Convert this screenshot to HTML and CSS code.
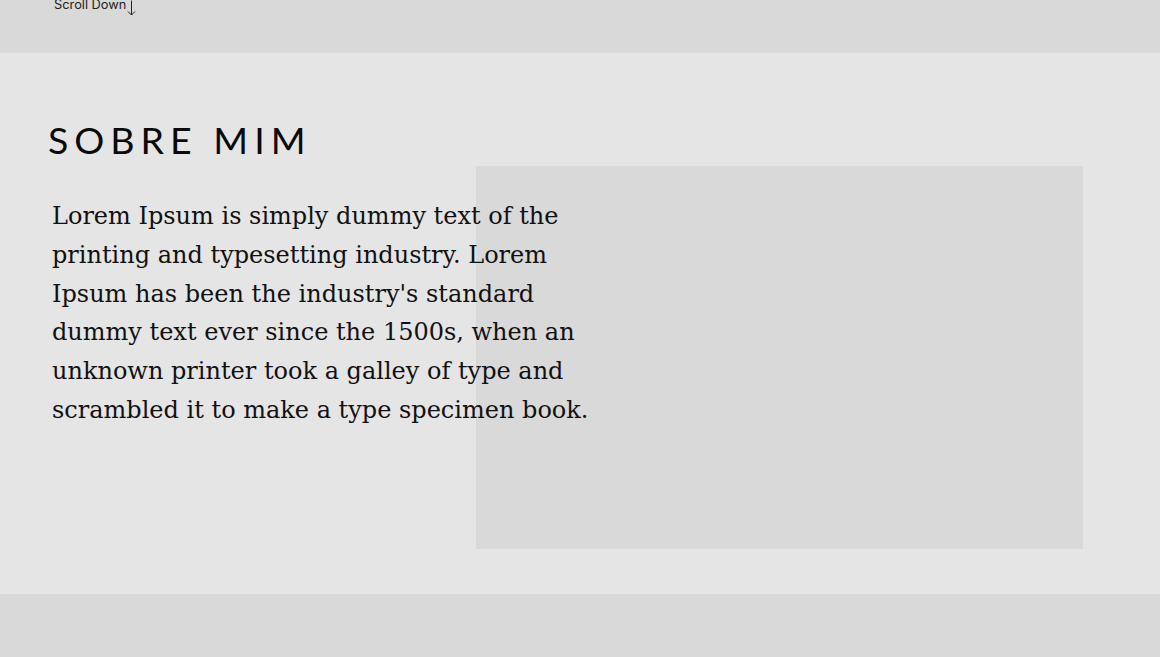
FILE: index.html
```html
<!DOCTYPE html>
<html lang="pt">
<head>
<meta charset="utf-8">
<title>Sobre mim</title>
<link rel="stylesheet" href="styles.css">
</head>
<body>
<header class="hero">
  <span class="scroll">Scroll Down<svg class="arrow" width="9" height="16" viewBox="0 0 9 16" fill="none" stroke="#222" stroke-width="1"><path d="M4.5 0.5V15M1 11.5L4.5 15L8 11.5"/></svg></span>
</header>
<section class="about">
  <h2 class="title">SOBRE MIM</h2>
  <div class="content">
    <p class="text">Lorem Ipsum is simply dummy text of the printing and typesetting industry. Lorem Ipsum has been the industry's standard dummy text ever since the 1500s, when an unknown printer took a galley of type and scrambled it to make a type specimen book.</p>
    <div class="photo"></div>
  </div>
</section>
<section class="next"></section>
</body>
</html>
```

FILE: styles.css
```css
* { box-sizing: border-box; }
html, body { margin: 0; padding: 0; }
body { background: #d9d9d9; font-family: "Liberation Sans", sans-serif; color: #000; }

.hero {
  height: 53px;
  background: #d9d9d9;
  display: flex;
  align-items: flex-start;
  padding-left: 54px;
}
.scroll {
  font-family: "Inter", "Liberation Sans", sans-serif;
  font-size: 12.8px;
  line-height: 13px;
  margin-top: -2px;
  color: #222;
  display: flex;
  align-items: flex-start;
}
.arrow { margin-left: 1px; margin-top: 2px; }

.about {
  background: #e5e5e5;
  height: 541px;
  padding: 65px 0 0 48px;
}
.title {
  margin: 0;
  font-family: "Lato", sans-serif;
  font-weight: 400;
  font-size: 37.5px;
  line-height: 44px;
  letter-spacing: 6px;
  color: #0a0a0a;
}
.content {
  display: grid;
  grid-template-columns: 4px 424px 126px 481px;
}
.text {
  grid-column: 2 / 4;
  grid-row: 1;
  position: relative;
  z-index: 1;
  margin: 35px 0 0;
  font-family: "DejaVu Serif", serif;
  font-size: 24px;
  line-height: 38.8px;
  color: #111;
}
.photo {
  grid-column: 3 / 5;
  grid-row: 1;
  height: 383px;
  background: #d9d9d9;
  margin-top: 4px;
}
.next { height: 63px; background: #d9d9d9; }
```
